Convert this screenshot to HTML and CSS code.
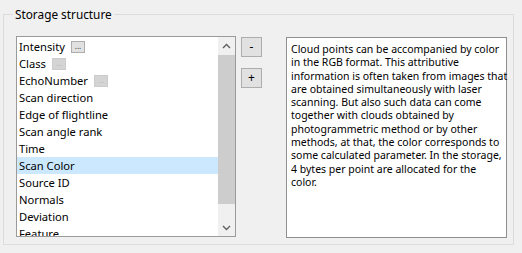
FILE: index.html
```html
<!DOCTYPE html>
<html lang="en">
<head>
    <meta charset="UTF-8">
    <title>Storage structure</title>
    <link rel="stylesheet" href="styles.css">
</head>
<body>

    <fieldset class="group">
        <legend>Storage structure</legend>

        <div class="row">
            <div class="list">
                <ul class="items">
                    <li>Intensity <span class="dots">...</span></li>
                    <li>Class <span class="dots off">...</span></li>
                    <li>EchoNumber <span class="dots off">...</span></li>
                    <li>Scan direction</li>
                    <li>Edge of flightline</li>
                    <li>Scan angle rank</li>
                    <li>Time</li>
                    <li class="selected">Scan Color</li>
                    <li>Source ID</li>
                    <li>Normals</li>
                    <li>Deviation</li>
                    <li>Feature</li>
                </ul>
                <div class="scrollbar">
                    <div class="arrow">
                        <svg width="9" height="6" viewBox="0 0 9 6"><polyline points="1,5 4.5,1.5 8,5" fill="none" stroke="#606060" stroke-width="1.4"/></svg>
                    </div>
                    <div class="thumb"></div>
                    <div class="track"></div>
                    <div class="arrow">
                        <svg width="9" height="6" viewBox="0 0 9 6"><polyline points="1,1 4.5,4.5 8,1" fill="none" stroke="#606060" stroke-width="1.4"/></svg>
                    </div>
                </div>
            </div>

            <div class="buttons">
                <button class="small-button">-</button>
                <button class="small-button">+</button>
            </div>

            <div class="description">
                Cloud points can be accompanied by color<br>
                in the RGB format. This attributive<br>
                information is often taken from images that<br>
                are obtained simultaneously with laser<br>
                scanning. But also such data can come<br>
                together with clouds obtained by<br>
                photogrammetric method or by other<br>
                methods, at that, the color corresponds to<br>
                some calculated parameter. In the storage,<br>
                4 bytes per point are allocated for the<br>
                color.
            </div>
        </div>
    </fieldset>

</body>
</html>
```

FILE: styles.css
```css
body {
    margin: 0;
    padding: 6px 8px 0 3px;
    background-color: #f0f0f0;
    font-family: "Noto Sans", "Open Sans", sans-serif;
    font-size: 11.2px;
    color: #000;
}
.group {
    margin: 0;
    padding: 14px 6px 6px 12px;
    border: 1px solid #dcdcdc;
}
.group legend {
    font-size: 11.8px;
    line-height: 16px;
    padding: 0 2px;
    margin-left: -3px;
}
.row {
    display: flex;
    align-items: flex-start;
}
.list {
    width: 220px;
    height: 201px;
    box-sizing: border-box;
    border: 1px solid #9a9a9a;
    background-color: #fff;
    display: flex;
}
.items {
    flex: 1;
    margin: 0;
    padding: 1px 0 0 0;
    list-style: none;
    overflow: hidden;
}
.items li {
    height: 17px;
    line-height: 17px;
    padding-left: 2px;
    white-space: nowrap;
    display: flex;
    align-items: center;
}
.items li.selected {
    background-color: #cce8ff;
}
.dots {
    width: 12px;
    height: 10px;
    margin-left: 6px;
    border: 1px solid #adadad;
    background-color: #e1e1e1;
    font-size: 8px;
    line-height: 8px;
    text-align: center;
    color: #333;
}
.dots.off {
    border-color: #cccccc;
    background-color: #d4d4d4;
    color: #bbb;
}
.scrollbar {
    width: 17px;
    display: flex;
    flex-direction: column;
    background-color: #f0f0f0;
}
.arrow {
    height: 17px;
    display: flex;
    justify-content: center;
    align-items: center;
}
.thumb {
    height: 149px;
    margin-top: 1px;
    background-color: #cdcdcd;
}
.track {
    flex: 1;
}
.buttons {
    display: flex;
    flex-direction: column;
    gap: 11px;
    margin-left: 5px;
    margin-top: 1px;
}
.small-button {
    width: 21px;
    height: 20px;
    padding: 0;
    border: 1px solid #adadad;
    background-color: #e1e1e1;
    font-family: inherit;
    font-size: 12px;
    line-height: 16px;
    color: #000;
}
.description {
    width: 221px;
    height: 201px;
    box-sizing: border-box;
    margin-left: 24px;
    margin-top: 1px;
    padding: 5px 3px 0 4px;
    border: 1px solid #8f8f8f;
    background-color: #fff;
    font-size: 10.5px;
    line-height: 13.3px;
    white-space: nowrap;
}
```
